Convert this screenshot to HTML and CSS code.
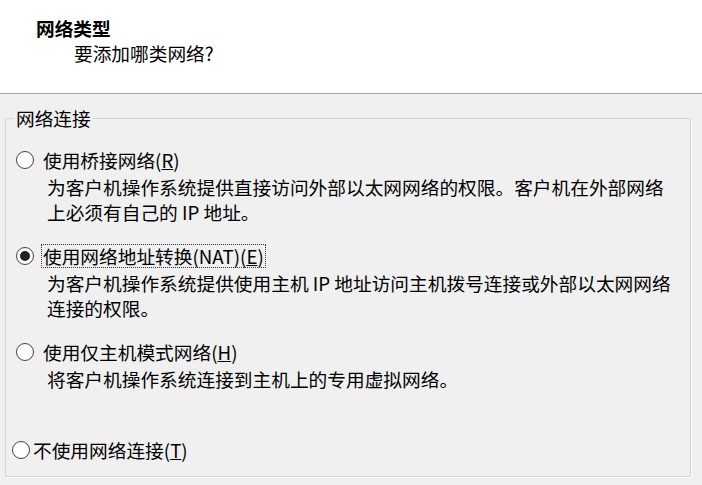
FILE: index.html
```html
<!DOCTYPE html>
<html lang="zh-CN">
<head>
    <meta charset="UTF-8">
    <title>网络类型</title>
    <link rel="stylesheet" href="styles.css">
</head>
<body>
    <div class="header">
        <div class="title">网络类型</div>
        <div class="subtitle">要添加哪类网络?</div>
    </div>

    <div class="page">
        <fieldset class="group">
            <legend>网络连接</legend>

            <div class="options">
                <div class="option">
                    <div class="choice">
                        <span class="radio"></span>
                        <span class="label">使用桥接网络(<u>R</u>)</span>
                    </div>
                    <div class="desc">为客户机操作系统提供直接访问外部以太网网络的权限。客户机在外部网络<br>上必须有自己的 IP 地址。</div>
                </div>

                <div class="option">
                    <div class="choice">
                        <span class="radio checked"></span>
                        <span class="label focused">使用网络地址转换(NAT)(<u>E</u>)</span>
                    </div>
                    <div class="desc">为客户机操作系统提供使用主机 IP 地址访问主机拨号连接或外部以太网网络<br>连接的权限。</div>
                </div>

                <div class="option">
                    <div class="choice">
                        <span class="radio"></span>
                        <span class="label">使用仅主机模式网络(<u>H</u>)</span>
                    </div>
                    <div class="desc">将客户机操作系统连接到主机上的专用虚拟网络。</div>
                </div>

                <div class="option option-none">
                    <div class="choice">
                        <span class="radio"></span>
                        <span class="label">不使用网络连接(<u>T</u>)</span>
                    </div>
                </div>
            </div>
        </fieldset>
    </div>
</body>
</html>
```

FILE: styles.css
```css
* {
    margin: 0;
    padding: 0;
    box-sizing: border-box;
}

html, body {
    width: 702px;
    height: 485px;
    overflow: hidden;
}

body {
    background: #f0f0f0;
    color: #000;
    font-family: "Noto Sans CJK SC", "Microsoft YaHei", sans-serif;
    font-size: 18.7px;
}

.header {
    height: 94px;
    background: #fff;
    border-bottom: 1px solid #a0a0a0;
    padding: 16px 0 0 36px;
}

.title {
    font-weight: bold;
    line-height: 24px;
}

.subtitle {
    line-height: 24px;
    margin: 1px 0 0 38px;
}

.page {
    padding: 12px 11px 0 5px;
}

.group {
    border: 1px solid #d5d5d5;
    box-shadow: 1px 1px 0 #fff;
    padding: 18px 10px 14px 10px;
}

.group legend {
    line-height: 24px;
    padding: 0 2px;
    margin-left: -2px;
}

.options {
    display: flex;
    flex-direction: column;
    gap: 20px;
}

.choice {
    display: flex;
    align-items: center;
    height: 24px;
}

.radio {
    display: flex;
    align-items: center;
    justify-content: center;
    width: 18px;
    height: 18px;
    border: 1.5px solid #444;
    border-radius: 50%;
    background: #fff;
    flex-shrink: 0;
}

.radio.checked::after {
    content: "";
    width: 10px;
    height: 10px;
    border-radius: 50%;
    background: #222;
}

.label {
    line-height: 24px;
    margin-left: 9px;
}

.label.focused {
    margin-left: 7px;
    padding: 0 2px;
    outline: 1px dotted #333;
    outline-offset: -1px;
}

.desc {
    line-height: 25px;
    margin: 2px 0 0 31px;
}

.option-none {
    margin: 27px 0 0 -4px;
}

.option-none .label {
    margin-left: 3px;
}
```
